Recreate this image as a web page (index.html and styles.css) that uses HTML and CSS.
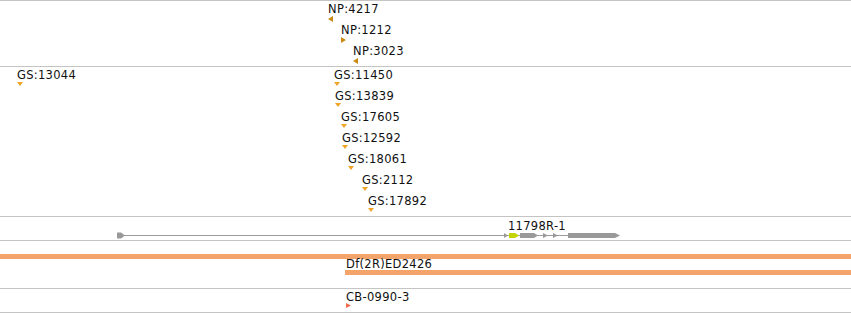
FILE: index.html
```html
<!DOCTYPE html>
<html lang="en">
<head>
    <meta charset="UTF-8">
    <title>Track view</title>
    <link rel="stylesheet" href="styles.css">
</head>
<body>
    <div class="browser">
        <!-- NP insertions -->
        <div class="track track-np">
            <div class="feature" style="left: 328px; top: 1px;">
                <div class="label">NP:4217</div>
                <svg class="glyph np" width="6" height="6"><path d="M5 0 L5 6 L0 3 Z"/></svg>
            </div>
            <div class="feature" style="left: 341px; top: 22px;">
                <div class="label">NP:1212</div>
                <svg class="glyph np" width="6" height="6"><path d="M0 0 L5 3 L0 6 Z"/></svg>
            </div>
            <div class="feature" style="left: 353px; top: 43px;">
                <div class="label">NP:3023</div>
                <svg class="glyph np" width="6" height="6"><path d="M5 0 L5 6 L0 3 Z"/></svg>
            </div>
        </div>

        <!-- GS insertions -->
        <div class="track track-gs">
            <div class="feature" style="left: 17px; top: 1px;">
                <div class="label">GS:13044</div>
                <svg class="glyph gs" width="6" height="4"><path d="M0 0 L6 0 L3 4 Z"/></svg>
            </div>
            <div class="feature" style="left: 334px; top: 1px;">
                <div class="label">GS:11450</div>
                <svg class="glyph gs" width="6" height="4"><path d="M0 0 L6 0 L3 4 Z"/></svg>
            </div>
            <div class="feature" style="left: 335px; top: 22px;">
                <div class="label">GS:13839</div>
                <svg class="glyph gs" width="6" height="4"><path d="M0 0 L6 0 L3 4 Z"/></svg>
            </div>
            <div class="feature" style="left: 341px; top: 43px;">
                <div class="label">GS:17605</div>
                <svg class="glyph gs" width="6" height="4"><path d="M0 0 L6 0 L3 4 Z"/></svg>
            </div>
            <div class="feature" style="left: 342px; top: 64px;">
                <div class="label">GS:12592</div>
                <svg class="glyph gs" width="6" height="4"><path d="M0 0 L6 0 L3 4 Z"/></svg>
            </div>
            <div class="feature" style="left: 348px; top: 85px;">
                <div class="label">GS:18061</div>
                <svg class="glyph gs" width="6" height="4"><path d="M0 0 L6 0 L3 4 Z"/></svg>
            </div>
            <div class="feature" style="left: 362px; top: 106px;">
                <div class="label">GS:2112</div>
                <svg class="glyph gs" width="6" height="4"><path d="M0 0 L6 0 L3 4 Z"/></svg>
            </div>
            <div class="feature" style="left: 368px; top: 127px;">
                <div class="label">GS:17892</div>
                <svg class="glyph gs" width="6" height="4"><path d="M0 0 L6 0 L3 4 Z"/></svg>
            </div>
        </div>

        <!-- gene model -->
        <div class="track track-gene">
            <svg class="gene" width="851" height="23">
                <line class="intron" x1="120" y1="18.5" x2="568" y2="18.5"/>
                <path class="exon" d="M117 15.5 H121 L125 18.5 L121 21.5 H117 Z"/>
                <path class="exon" d="M504 16 L508 18.5 L504 21 Z"/>
                <path class="utr" d="M509 16 H515 L519 18.5 L515 21 H509 Z"/>
                <path class="exon" d="M520 16 H534 L538 18.5 L534 21 H520 Z"/>
                <path class="exon" d="M543 16 L548 18.5 L543 21 Z"/>
                <path class="exon" d="M553 16 L558 18.5 L553 21 Z"/>
                <path class="exon" d="M568 16 H615 L620 18.5 L615 21 H568 Z"/>
            </svg>
            <div class="feature" style="left: 508px; top: 2px;">
                <div class="label">11798R-1</div>
            </div>
        </div>

        <!-- deficiencies -->
        <div class="track track-df">
            <div class="bar bar-full"></div>
            <div class="feature feature-wide" style="left: 345px; top: 16px;">
                <div class="label label-df">Df(2R)ED2426</div>
                <div class="bar"></div>
            </div>
        </div>

        <!-- constructs -->
        <div class="track track-cb">
            <div class="feature" style="left: 346px; top: 1px;">
                <div class="label">CB-0990-3</div>
                <svg class="glyph cb" width="6" height="6"><path d="M0 0 L5 2.5 L0 5 Z"/></svg>
            </div>
        </div>
    </div>
</body>
</html>
```

FILE: styles.css
```css
* { margin: 0; padding: 0; box-sizing: content-box; }
body {
    font-family: 'DejaVu Sans', sans-serif;
    font-size: 11.5px;
    color: #111;
    background: white;
}
.browser {
    width: 851px;
    overflow: hidden;
}
.track {
    position: relative;
    border-top: 1px solid #c4c4c4;
}
.track-np { height: 65px; }
.track-gs { height: 149px; }
.track-gene { height: 23px; }
.track-df { height: 47px; }
.track-cb {
    height: 23px;
    border-bottom: 1px solid #c4c4c4;
}
.feature {
    position: absolute;
}
.feature-wide {
    right: 0;
}
.label {
    padding-top: 1px;
    line-height: 12px;
    letter-spacing: 0.3px;
    white-space: nowrap;
}
.label-df {
    padding-left: 1px;
}
.glyph {
    display: block;
    margin-top: 1px;
}
.np { fill: #c88a10; }
.gs { fill: #f0a428; }
.cb { fill: #f26a4c; margin-top: 0; }
.gene {
    display: block;
}
.intron {
    stroke: #9c9c9c;
    stroke-width: 1;
}
.exon { fill: #999; }
.utr { fill: #c4d400; }
.bar {
    height: 5px;
    background: #f4a46a;
}
.bar-full {
    position: absolute;
    left: 0;
    right: 0;
    top: 13px;
}
```
